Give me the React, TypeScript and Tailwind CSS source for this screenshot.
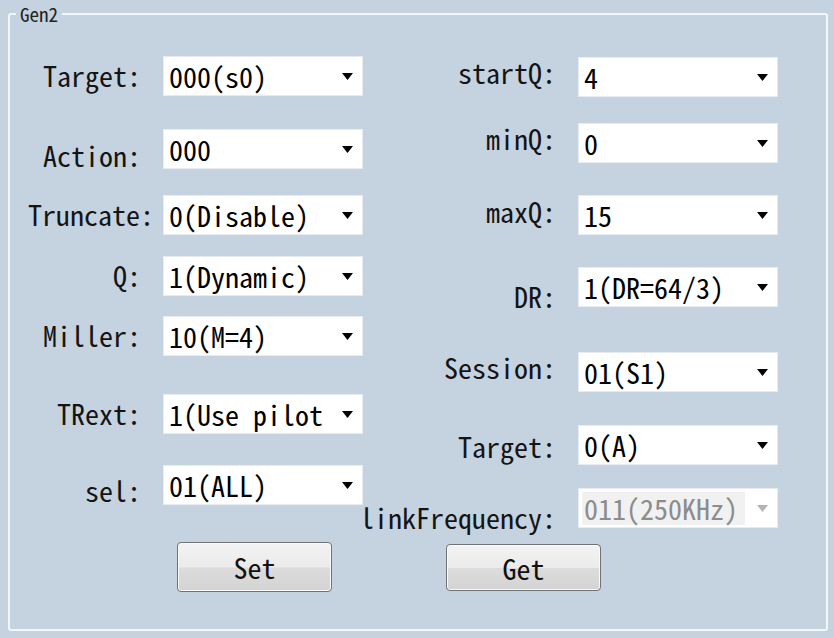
import React from "react";

const FONT = "[font-family:'Noto_Sans_Mono_CJK_SC','Liberation_Mono',monospace]";

function Arrow({ disabled }: { disabled?: boolean }) {
  return (
    <svg width="11" height="7" viewBox="0 0 11 7" className="shrink-0">
      <polygon points="0,0 11,0 5.5,7" fill={disabled ? "#b4b4b4" : "#000"} />
    </svg>
  );
}

function Combo({ value, disabled }: { value: string; disabled?: boolean }) {
  if (disabled) {
    return (
      <div className="w-[200px] h-[40px] shrink-0 bg-white border border-[#e6ecf2] flex items-center pl-[3px] pr-[9px]">
        <div className="w-[163px] h-[33px] bg-[#f1f1f1] flex items-center pl-[2px] text-[#8c8c8c] whitespace-nowrap">
          {value}
        </div>
        <div className="flex-1" />
        <Arrow disabled />
      </div>
    );
  }
  return (
    <div className="w-[200px] h-[40px] shrink-0 bg-white border border-[#e6ecf2] flex items-center pl-[5px] pr-[9px] text-black">
      <div className="flex-1 whitespace-nowrap leading-[32px]">{value}</div>
      <Arrow />
    </div>
  );
}

type Row = { label: string; value: string; gap: string; shift: string; pr?: string; disabled?: boolean };

// shift moves the label against its combo without changing the row height
const left: Row[] = [
  { label: "Target:", value: "000(s0)", gap: "mt-[32px]", shift: "-mt-[1px] mb-[1px]" },
  { label: "Action:", value: "000", gap: "mt-[33px]", shift: "mt-[6px] -mb-[6px]" },
  { label: "Truncate:", value: "0(Disable)", gap: "mt-[26px]", shift: "-mt-[1px] mb-[1px]", pr: "pr-[9px]" },
  { label: "Q:", value: "1(Dynamic)", gap: "mt-[21px]", shift: "-mt-[1px] mb-[1px]" },
  { label: "Miller:", value: "10(M=4)", gap: "mt-[20px]", shift: "-mt-[1px] mb-[1px]" },
  { label: "TRext:", value: "1(Use pilot", gap: "mt-[38px]", shift: "-mt-[1px] mb-[1px]" },
  { label: "sel:", value: "01(ALL)", gap: "mt-[31px]", shift: "mt-[5px] -mb-[5px]" },
];

const right: Row[] = [
  { label: "startQ:", value: "4", gap: "mt-[33px]", shift: "-mt-[5px] mb-[5px]" },
  { label: "minQ:", value: "0", gap: "mt-[26px]", shift: "-mt-[5px] mb-[5px]" },
  { label: "maxQ:", value: "15", gap: "mt-[32px]", shift: "-mt-[4px] mb-[4px]" },
  { label: "DR:", value: "1(DR=64/3)", gap: "mt-[32px]", shift: "mt-[9px] -mb-[9px]" },
  { label: "Session:", value: "01(S1)", gap: "mt-[45px]", shift: "-mt-[5px] mb-[5px]" },
  { label: "Target:", value: "0(A)", gap: "mt-[33px]", shift: "mt-[1px] -mb-[1px]" },
  { label: "linkFrequency:", value: "011(250KHz)", gap: "mt-[23px]", shift: "mt-[9px] -mb-[9px]", disabled: true },
];

function Column({ rows, labelW }: { rows: Row[]; labelW: string }) {
  return (
    <div className="flex flex-col">
      {rows.map((r) => (
        <div key={r.label} className={`flex items-start ${r.gap}`}>
          <div className={`${labelW} h-[40px] shrink-0 flex items-center justify-end whitespace-nowrap text-[#141414] ${r.pr ?? "pr-[22px]"} ${r.shift}`}>
            {r.label}
          </div>
          <Combo value={r.value} disabled={r.disabled} />
        </div>
      ))}
    </div>
  );
}

function Button({ text, extra }: { text: string; extra: string }) {
  return (
    <div
      className={`w-[155px] rounded-[4px] border border-[#6f7378] bg-[linear-gradient(#f3f3f3_0%,#ebebeb_50%,#dcdcdc_52%,#d3d3d3_100%)] shadow-[inset_0_0_0_1px_#fafafa] flex items-center justify-center text-[#111] ${extra}`}
    >
      {text}
    </div>
  );
}

export default function App() {
  return (
    <div className={`w-[834px] h-[638px] bg-[#c5d2df] pt-[4px] pl-[8px] overflow-hidden ${FONT} text-[28px] leading-none`}>
      <fieldset className="w-[820px] h-[627px] border-2 border-[#f3f6f9] rounded-[3px]">
        <legend className="ml-[6px] px-[4px] text-[19px] leading-[20px] text-[#222]">Gen2</legend>
        <div className="flex">
          <Column rows={left} labelW="w-[153px]" />
          <Column rows={right} labelW="w-[215px]" />
        </div>
        <div className="flex items-start mt-[14px]">
          <Button text="Set" extra="ml-[167px] h-[50px]" />
          <Button text="Get" extra="ml-[114px] mt-[2px] h-[47px]" />
        </div>
      </fieldset>
    </div>
  );
}
